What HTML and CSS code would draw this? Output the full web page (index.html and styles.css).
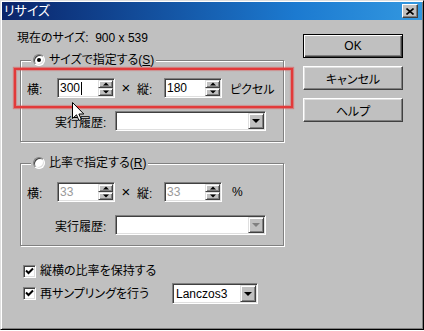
FILE: index.html
```html
<!DOCTYPE html>
<html lang="ja">
<head>
    <meta charset="UTF-8">
    <title>リサイズ</title>
    <link rel="stylesheet" href="styles.css">
</head>
<body>
    <div class="window">
        <div class="titlebar">
            <span class="title">リサイズ</span>
            <span class="close">
                <svg width="8" height="7" viewBox="0 0 8 7"><path d="M0.5 0.5 L7.5 6.5 M7.5 0.5 L0.5 6.5" stroke="#000" stroke-width="1.6"/></svg>
            </span>
        </div>

        <div class="client">
            <div class="left">
                <div class="current">現在のサイズ:&nbsp; 900 x 539</div>

                <!-- サイズで指定 -->
                <fieldset class="group">
                    <legend><span class="radio checked"></span>サイズで指定する(<u>S</u>)</legend>
                    <div class="row">
                        <span class="lbl">横:</span>
                        <div class="spin">
                            <span class="val">300<span class="caret"></span></span>
                            <div class="spin-btns"><span class="sb up"></span><span class="sb down"></span></div>
                        </div>
                        <span class="times">×</span>
                        <span class="lbl2">縦:</span>
                        <div class="spin">
                            <span class="val">180</span>
                            <div class="spin-btns"><span class="sb up"></span><span class="sb down"></span></div>
                        </div>
                        <span class="unit">ピクセル</span>
                    </div>
                    <div class="row hist">
                        <span class="hlbl">実行履歴:</span>
                        <div class="combo"><span class="val"></span><span class="drop"></span></div>
                    </div>
                </fieldset>

                <!-- 比率で指定 -->
                <fieldset class="group second">
                    <legend><span class="radio"></span>比率で指定する(<u>R</u>)</legend>
                    <div class="row">
                        <span class="lbl">横:</span>
                        <div class="spin off">
                            <span class="val">33</span>
                            <div class="spin-btns"><span class="sb up"></span><span class="sb down"></span></div>
                        </div>
                        <span class="times">×</span>
                        <span class="lbl2">縦:</span>
                        <div class="spin off">
                            <span class="val">33</span>
                            <div class="spin-btns"><span class="sb up"></span><span class="sb down"></span></div>
                        </div>
                        <span class="unit pct">%</span>
                    </div>
                    <div class="row hist">
                        <span class="hlbl">実行履歴:</span>
                        <div class="combo off"><span class="val"></span><span class="drop"></span></div>
                    </div>
                </fieldset>

                <div class="check-row first">
                    <span class="checkbox"><svg width="9" height="9" viewBox="0 0 9 9"><path d="M1 3.5 L3.5 6 L8 1.5" fill="none" stroke="#000" stroke-width="2"/></svg></span>
                    <span class="check-lbl">縦横の比率を保持する</span>
                </div>
                <div class="check-row second">
                    <span class="checkbox"><svg width="9" height="9" viewBox="0 0 9 9"><path d="M1 3.5 L3.5 6 L8 1.5" fill="none" stroke="#000" stroke-width="2"/></svg></span>
                    <span class="check-lbl">再サンプリングを行う</span>
                    <div class="select"><span class="val">Lanczos3</span><span class="drop"></span></div>
                </div>
            </div>

            <div class="right">
                <button class="btn default">OK</button>
                <button class="btn">キャンセル</button>
                <button class="btn">ヘルプ</button>
            </div>
        </div>

        <!-- 注釈の赤枠とマウスカーソル -->
        <div class="highlight"></div>
        <svg class="cursor" width="13" height="20" viewBox="0 0 13 20">
            <path d="M0.5 0.5 L0.5 16.5 L4.5 12.8 L7 18.5 L9.3 17.5 L6.9 12 L11.8 12 Z" fill="#fff" stroke="#000" stroke-width="1"/>
        </svg>
    </div>
</body>
</html>
```

FILE: styles.css
```css
body {
    margin: 0;
    font-family: "Liberation Sans", "Noto Sans CJK JP", sans-serif;
    font-size: 12px;
    font-feature-settings: "palt";
    color: #000;
}
.window {
    position: relative;
    width: 424px;
    height: 330px;
    box-sizing: border-box;
    background: #c0c0c0;
    border: 1px solid;
    border-color: #dfdfdf #000 #000 #dfdfdf;
    box-shadow: inset 1px 1px #fff, inset -1px -1px #808080;
    padding: 1px;
}
.titlebar {
    height: 18px;
    display: flex;
    align-items: center;
    justify-content: space-between;
    background: linear-gradient(to right, #0a246a, #1c7ad0 70%, #3398e0);
    padding-left: 2px;
}
.title {
    color: #fff;
    font-size: 13px;
    line-height: 14px;
}
.close {
    width: 16px;
    height: 14px;
    box-sizing: border-box;
    margin-right: 4px;
    background: #c0c0c0;
    border: 1px solid;
    border-color: #fff #404040 #404040 #fff;
    box-shadow: inset -1px -1px #808080;
    display: flex;
    align-items: center;
    justify-content: center;
}
.close svg { display: block; }

.client {
    display: flex;
}
.left {
    width: 301px;
}
.current {
    margin: 11px 0 0 15px;
    line-height: 14px;
    height: 14px;
}

/* group boxes */
.group {
    margin: 8px 0 0 18px;
    width: 264px;
    min-width: 0;
    box-sizing: border-box;
    padding: 11px 0 10px 0;
    border: 1px solid #808080;
    box-shadow: inset 1px 1px #fff, 1px 1px #fff;
}
.group.second {
    margin-top: 14px;
    padding-top: 12px;
}
.group legend {
    display: flex;
    align-items: center;
    margin-left: 10px;
    padding: 0 2px;
    line-height: 14px;
    height: 14px;
    background: #c0c0c0;
}
.radio {
    position: relative;
    width: 12px;
    height: 12px;
    box-sizing: border-box;
    border-radius: 50%;
    background: #fff;
    border: 1px solid;
    border-color: #808080 #fff #fff #808080;
    box-shadow: inset 1px 1px #404040, inset -1px -1px #dfdfdf;
    margin-right: 4px;
}
.radio.checked::after {
    content: "";
    position: absolute;
    left: 3px;
    top: 3px;
    width: 4px;
    height: 4px;
    border-radius: 50%;
    background: #000;
}

.row {
    display: flex;
    align-items: center;
    height: 20px;
}
.row.hist {
    margin-top: 13px;
}
.lbl {
    margin-left: 6px;
    width: 30px;
}
.times {
    width: 22px;
    text-align: center;
    font-size: 15px;
    line-height: 14px;
}
.lbl2 {
    width: 27px;
}
.unit {
    margin-left: 8px;
}
.unit.pct {
    margin-left: 10px;
}
.hlbl {
    margin-left: 34px;
    width: 60px;
}

/* sunken fields */
.spin, .combo, .select {
    display: flex;
    align-items: stretch;
    box-sizing: border-box;
    height: 20px;
    background: #fff;
    border: 1px solid;
    border-color: #808080 #fff #fff #808080;
    box-shadow: inset 1px 1px #404040, inset -1px -1px #dfdfdf;
    padding: 1px;
}
.spin {
    width: 58px;
}
.val {
    flex: 1;
    display: flex;
    align-items: center;
    padding-left: 1px;
    line-height: 16px;
}
.spin.off .val {
    color: #9a9a9a;
}
.caret {
    width: 1px;
    height: 13px;
    background: #000;
    margin-left: 1px;
}
.spin-btns {
    display: flex;
    flex-direction: column;
    width: 15px;
}
.sb, .drop {
    position: relative;
    box-sizing: border-box;
    background: #c0c0c0;
    border: 1px solid;
    border-color: #dfdfdf #404040 #404040 #dfdfdf;
    box-shadow: inset 1px 1px #fff, inset -1px -1px #808080;
}
.sb {
    height: 8px;
}
.sb::after, .drop::after {
    content: "";
    position: absolute;
    left: 50%;
    top: 50%;
    width: 0;
    height: 0;
    border-left: 3px solid transparent;
    border-right: 3px solid transparent;
    transform: translate(-50%, -50%);
}
.sb.up::after { border-bottom: 3px solid #000; }
.sb.down::after { border-top: 3px solid #000; }

.combo {
    width: 151px;
}
.drop {
    width: 16px;
}
.drop::after {
    border-left-width: 4px;
    border-right-width: 4px;
    border-top: 4px solid #000;
}
.combo.off .drop::after {
    border-top-color: #808080;
}

/* checkboxes */
.check-row {
    display: flex;
    align-items: center;
    margin-left: 21px;
}
.check-row.first {
    margin-top: 18px;
    height: 14px;
}
.check-row.second {
    margin-top: 5px;
    height: 21px;
}
.checkbox {
    width: 13px;
    height: 13px;
    box-sizing: border-box;
    background: #fff;
    border: 1px solid;
    border-color: #808080 #fff #fff #808080;
    box-shadow: inset 1px 1px #404040, inset -1px -1px #dfdfdf;
    display: flex;
    align-items: center;
    justify-content: center;
}
.checkbox svg { display: block; }
.check-lbl {
    margin-left: 4px;
    width: 132px;
    line-height: 14px;
}
.select {
    width: 86px;
    height: 21px;
}
.select .val {
    padding-left: 2px;
}

/* buttons */
.right {
    width: 100px;
    padding-top: 14px;
    display: flex;
    flex-direction: column;
    gap: 8px;
}
.btn {
    height: 24px;
    width: 100px;
    font-family: inherit;
    font-size: 12px;
    font-feature-settings: "palt";
    color: #000;
    background: #c0c0c0;
    border: 1px solid;
    border-color: #fff #404040 #404040 #fff;
    box-shadow: inset -1px -1px #808080, inset 1px 1px #dfdfdf;
    padding: 0;
}
.btn.default {
    border: 1px solid #000;
    box-shadow: inset 1px 1px #fff, inset -1px -1px #404040, inset -2px -2px #808080;
}

/* overlay */
.highlight {
    position: absolute;
    left: 13px;
    top: 67px;
    width: 279px;
    height: 40px;
    box-sizing: border-box;
    border: 2px solid #e23a3a;
    box-shadow: 0 0 1px 1px rgba(226, 70, 70, 0.55), inset 0 0 1px 1px rgba(226, 70, 70, 0.4);
}
.cursor {
    position: absolute;
    left: 71px;
    top: 101px;
}
```
